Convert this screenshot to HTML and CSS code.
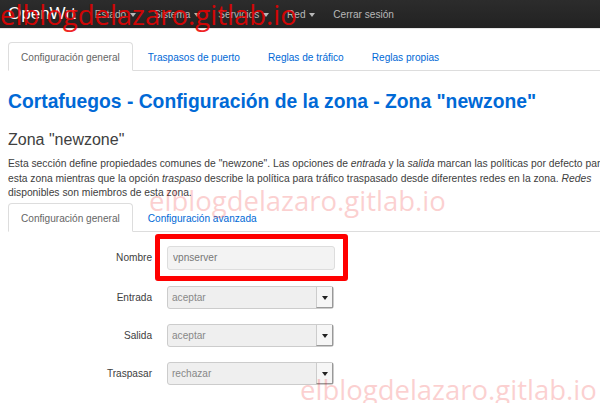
FILE: index.html
```html
<!DOCTYPE html>
<html lang="es">
<head>
    <meta charset="UTF-8">
    <title>OpenWrt - Cortafuegos - Zona newzone</title>
    <link rel="stylesheet" href="styles.css">
</head>
<body>
    <!-- Top bar -->
    <div class="topbar">
        <a class="brand" href="#">OpenWrt</a>
        <ul class="nav">
            <li><a href="#">Estado <span class="caret"></span></a></li>
            <li><a href="#">Sistema <span class="caret"></span></a></li>
            <li><a href="#">Servicios <span class="caret"></span></a></li>
            <li><a href="#">Red <span class="caret"></span></a></li>
            <li><a href="#">Cerrar sesión</a></li>
        </ul>
    </div>

    <div class="container">
        <!-- Firewall sections -->
        <ul class="tabs">
            <li class="active"><a href="#">Configuración general</a></li>
            <li><a href="#">Traspasos de puerto</a></li>
            <li><a href="#">Reglas de tráfico</a></li>
            <li><a href="#">Reglas propias</a></li>
        </ul>

        <h2 class="page-title">Cortafuegos - Configuración de la zona - Zona "newzone"</h2>

        <h3 class="zone-title">Zona "newzone"</h3>
        <p class="zone-desc">Esta sección define propiedades comunes de "newzone". Las opciones de <em>entrada</em> y la <em>salida</em> marcan las políticas por defecto para el tráfico que entra y sale de<br>esta zona mientras que la opción <em>traspaso</em> describe la política para tráfico traspasado desde diferentes redes en la zona. <em>Redes</em><br>disponibles son miembros de esta zona.</p>

        <ul class="tabs sub">
            <li class="active"><a href="#">Configuración general</a></li>
            <li><a href="#">Configuración avanzada</a></li>
        </ul>

        <div class="form">
            <div class="row first">
                <label>Nombre</label>
                <div class="highlight">
                    <input type="text" value="vpnserver">
                </div>
            </div>
            <div class="row">
                <label>Entrada</label>
                <div class="select"><span>aceptar</span><i class="arrow"></i></div>
            </div>
            <div class="row">
                <label>Salida</label>
                <div class="select"><span>aceptar</span><i class="arrow"></i></div>
            </div>
            <div class="row">
                <label>Traspasar</label>
                <div class="select"><span>rechazar</span><i class="arrow"></i></div>
            </div>
        </div>
    </div>

    <!-- Blog watermark -->
    <div class="mark mark-top">elblogdelazaro.gitlab.io</div>
    <div class="mark mark-mid">elblogdelazaro.gitlab.io</div>
    <div class="mark mark-low">elblogdelazaro.gitlab.io</div>
</body>
</html>
```

FILE: styles.css
```css
body {
    margin: 0;
    font-family: 'Liberation Sans', Arial, sans-serif;
    font-size: 10.1px;
    color: #404040;
    background: #fff;
    overflow: hidden;
    width: 600px;
    height: 403px;
    position: relative;
}

a {
    text-decoration: none;
    color: #0069d6;
}

ul {
    list-style: none;
    margin: 0;
    padding: 0;
}

/* Top bar */
.topbar {
    height: 28px;
    background: linear-gradient(#2c2c2c, #222);
    display: flex;
    align-items: center;
    padding-left: 8px;
    border-bottom: 1px solid #e6e6e6;
}

.topbar .brand {
    color: #fff;
    font-size: 17px;
    margin-right: 10px;
}

.nav {
    display: flex;
}

.nav li a {
    color: #b8b8b8;
    padding: 0 9px;
}

.caret {
    display: inline-block;
    border-left: 3px solid transparent;
    border-right: 3px solid transparent;
    border-top: 4px solid #b8b8b8;
    vertical-align: middle;
    margin-left: 1px;
}

.container {
    padding-left: 8px;
    white-space: nowrap;
}

/* Tabs */
.tabs {
    display: flex;
    border-bottom: 1px solid #ddd;
    margin-top: 13px;
}

.tabs li {
    margin-bottom: -1px;
}

.tabs li a {
    display: block;
    height: 27px;
    line-height: 29px;
    padding: 0 12px;
    border: 1px solid transparent;
    border-radius: 4px 4px 0 0;
    margin-right: 2px;
}

.tabs li.active a {
    color: #666;
    border-color: #ddd;
    border-bottom-color: #fff;
    background: #fff;
}

.page-title {
    font-size: 19.3px;
    color: #0069d6;
    margin: 19px 0 0;
    line-height: 24px;
}

.zone-title {
    font-size: 16px;
    font-weight: normal;
    color: #404040;
    margin: 14px 0 0;
    line-height: 24px;
}

.zone-desc {
    margin: 5px 0 0;
    font-size: 10.3px;
    line-height: 14.5px;
}

.tabs.sub {
    margin-top: 2px;
}

/* Form */
.form {
    margin-top: 2px;
}

.row {
    display: flex;
    align-items: center;
    margin-bottom: 15px;
}

.row.first {
    margin-bottom: 5px;
}

.row label {
    width: 144px;
    text-align: right;
    color: #404040;
    padding-right: 15px;
}

.highlight {
    border: 5px solid #f00;
    border-radius: 3px;
    padding: 7px 8px 6px 7px;
    margin-left: -12px;
}

.highlight input {
    display: block;
    width: 156px;
    height: 22px;
    padding: 0 5px;
    border: 1px solid #ddd;
    border-radius: 3px;
    background: #f3f3f3;
    font-family: inherit;
    font-size: 10.1px;
    color: #777;
}

.select {
    display: flex;
    width: 165px;
    height: 21px;
    border: 1px solid #ccc;
    border-radius: 3px;
    background: #efefef;
    color: #888;
}

.select span {
    flex: 1;
    line-height: 21px;
    padding-left: 4px;
}

.select .arrow {
    width: 15px;
    border-left: 1px solid #ccc;
    border-bottom: 1px solid #999;
    border-right: 1px solid #999;
    background: #f6f6f6;
    position: relative;
}

.select .arrow::after {
    content: '';
    position: absolute;
    left: 5px;
    top: 9px;
    border-left: 3px solid transparent;
    border-right: 3px solid transparent;
    border-top: 4px solid #222;
}

/* Watermark text laid over the page */
.mark {
    position: absolute;
    font-family: 'Open Sans', 'Liberation Sans', sans-serif;
    font-size: 27.5px;
    color: #e00;
    white-space: nowrap;
    pointer-events: none;
}

.mark-top {
    left: 0;
    top: -4px;
    opacity: 0.85;
}

.mark-mid {
    left: 149px;
    top: 182px;
    opacity: 0.18;
}

.mark-low {
    left: 300px;
    top: 371px;
    opacity: 0.18;
}
```
